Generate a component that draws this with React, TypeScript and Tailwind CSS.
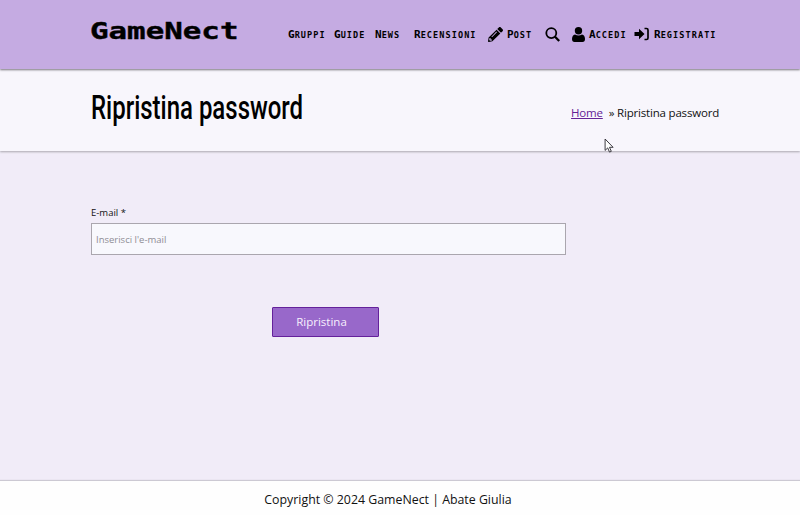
import { FaPencilAlt } from "react-icons/fa";

function NavLabel({ text, className }: { text: string; className: string }) {
  return (
    <a className={`flex items-baseline font-['DejaVu_Sans_Mono',monospace] font-bold uppercase leading-none ${className}`}>
      <span className="text-[11px]">{text[0]}</span>
      <span className="text-[8.5px] tracking-[1.1px]">{text.slice(1)}</span>
    </a>
  );
}

function Header() {
  return (
    <header className="z-20 flex h-[69px] shrink-0 items-start bg-[#c5abe2] pl-[90px] text-black shadow-[0_1px_2px_#77747b]">
      <div className="mt-[18px] w-[198px] shrink-0">
        <span className="inline-block origin-left scale-x-[1.37] whitespace-nowrap font-['DejaVu_Sans_Mono',monospace] text-[22.5px] font-bold leading-[27px] [-webkit-text-stroke:0.4px_black]">
          GameNect
        </span>
      </div>
      <nav className="flex h-[68px] items-center">
        <NavLabel text="Gruppi" className="w-[46px]" />
        <NavLabel text="Guide" className="w-[41px]" />
        <NavLabel text="News" className="w-[39px]" />
        <NavLabel text="Recensioni" className="w-[74px]" />
        <FaPencilAlt className="mr-[4px] size-[15px]" />
        <NavLabel text="Post" className="w-[38px]" />
        <svg viewBox="0 0 15 15" className="mr-[12px] size-[15px]" fill="none" stroke="black">
          <circle cx="6.3" cy="6.1" r="5" strokeWidth="1.8" />
          <path d="m10 9.8 4.2 4.2" strokeWidth="2.3" />
        </svg>
        <svg viewBox="0 0 13 15" className="mr-[4px] h-[15px] w-[13px]">
          <circle cx="6.5" cy="3.7" r="3.7" />
          <path d="M3 7.4q3.5 2.2 7 0 3 .9 3 4.6 0 3-2.5 3h-8Q0 15 0 12q0-3.7 3-4.6z" />
        </svg>
        <NavLabel text="Accedi" className="w-[45px]" />
        <svg viewBox="0 0 16 14" className="mr-[4px] h-[14px] w-[16px]">
          <path d="M0.5 5h4.5V1.8l5.5 5.2-5.5 5.2V9H.5z" />
          <path d="M10.5 1.5h2q1.5 0 1.5 1.5v8q0 1.5-1.5 1.5h-2" fill="none" stroke="black" strokeWidth="1.7" />
        </svg>
        <NavLabel text="Registrati" className="w-[64px]" />
      </nav>
    </header>
  );
}

export default function App() {
  return (
    <div className="relative flex h-[515px] w-[800px] flex-col overflow-hidden bg-[#f1ecf8] font-['Open_Sans','Noto_Sans',sans-serif] text-[#111]">
      <Header />
      <section className="z-10 flex h-[82px] shrink-0 justify-between bg-[#f8f6fc] pl-[91px] pr-[81px] shadow-[0_1px_2px_#aaa8af]">
        <h1 className="mt-[18px] w-[215px] origin-left scale-x-[0.705] whitespace-nowrap font-[Roboto,sans-serif] text-[34px] font-medium leading-[40px] text-black">
          Ripristina password
        </h1>
        <p className="mt-[36px] whitespace-nowrap text-[11.5px] leading-[16px] tracking-[-0.19px]">
          <a className="mr-[6px] text-[#642296] underline">Home</a>» Ripristina password
        </p>
      </section>
      <main className="flex flex-1 flex-col pl-[91px]">
        <label className="mt-[55px] text-[9.5px] leading-[14px]">E-mail *</label>
        <input
          className="mt-[3px] h-[32px] w-[475px] border border-[#aaa6ae] bg-[#f8f8fd] px-[4px] text-[9.5px] placeholder:text-[#8f8d94]"
          placeholder="Inserisci l'e-mail"
        />
        <button className="ml-[181px] mt-[52px] h-[30px] w-[107px] rounded-[1px] border border-[#64219b] bg-[#9868ca] pr-[8px] text-[11.5px] text-[#f7effd]">
          Ripristina
        </button>
      </main>
      <footer className="flex h-[34px] shrink-0 justify-center bg-[#fefefe] pr-[24px] pt-[10px] text-[12.35px] leading-[18px] shadow-[0_-1px_1px_#ccc9d3]">
        Copyright © 2024 GameNect | Abate Giulia
      </footer>
      <svg viewBox="0 0 9 15" className="absolute left-[604px] top-[138px] z-30 h-[15px] w-[10px]">
        <path d="M.6 1v11.4l2.6-2.5 1.8 4.2 1.8-.8-1.8-4h3.6z" fill="white" stroke="#28262c" strokeWidth=".9" />
      </svg>
    </div>
  );
}
